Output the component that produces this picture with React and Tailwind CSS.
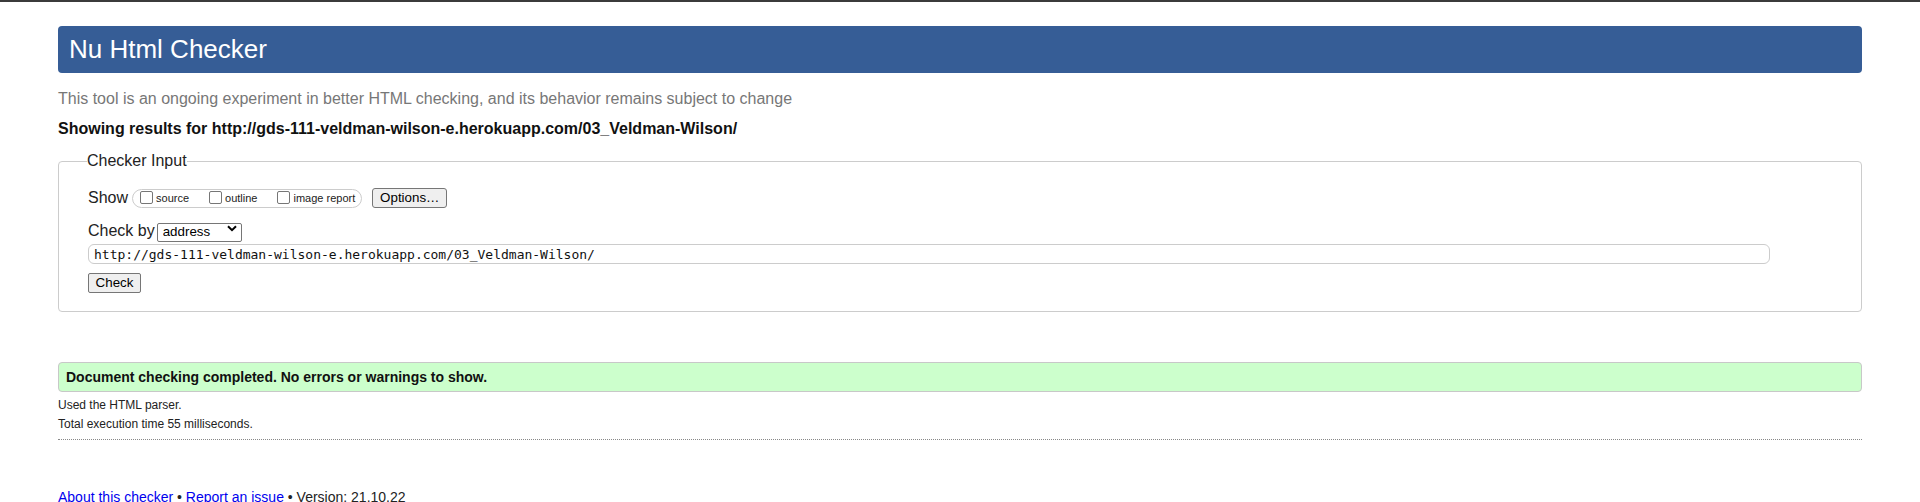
import React from 'react'

const url = 'http://gds-111-veldman-wilson-e.herokuapp.com/03_Veldman-Wilson/'

function ShowOption({ label, last }) {
  return (
    <label className={`flex items-center ${last ? '' : 'mr-[20px]'}`}>
      <input
        type="checkbox"
        className="appearance-none w-[13px] h-[13px] mb-[2px] border border-[#767676] rounded-[2px] bg-white"
      />
      <span className="ml-[3px] text-[11px] leading-[13px] text-[#222]">{label}</span>
    </label>
  )
}

function CheckerInput() {
  return (
    <fieldset className="mt-[12px] border border-[#cccccc] rounded-[4px] px-[29px] pb-[18px]">
      <legend className="-ml-[1px] text-[16px] leading-[20px] text-[#222]">Checker Input</legend>

      <div className="mt-[17px] flex items-center h-[20px]">
        <span className="text-[16px] leading-[20px] text-[#222]">Show</span>
        <div className="ml-[4px] flex items-center h-[19px] pl-[7px] pr-[6px] border border-[#cccccc] rounded-full">
          <ShowOption label="source" />
          <ShowOption label="outline" />
          <ShowOption label="image report" last />
        </div>
        <button className="ml-[10px] w-[75px] h-[20px] bg-[#efefef] border border-[#767676] rounded-[3px] text-[13.33px] leading-[16px] text-black">
          Options…
        </button>
      </div>

      <div className="mt-[13px] flex items-center h-[20px]">
        <span className="text-[16px] leading-[20px] text-[#222]">Check by</span>
        <div className="relative ml-[2px]">
          <select className="appearance-none w-[85px] h-[19px] pl-[5px] bg-white border border-[#767676] rounded-[2px] text-[13.33px] leading-[16px] text-black">
            <option>address</option>
          </select>
          <svg className="absolute right-[5px] top-[6px] pointer-events-none" width="10" height="7" viewBox="0 0 10 7">
            <path d="M1 1.2l4 4 4-4" fill="none" stroke="#000" strokeWidth="2" />
          </svg>
        </div>
      </div>

      <input
        readOnly
        value={url}
        className="mt-[3px] block w-[1682px] h-[20px] px-[5px] border border-[#cccccc] rounded-[6px] text-[13px] leading-[18px] text-[#111] font-['DejaVu_Sans_Mono',monospace]"
      />

      <button className="mt-[9px] block w-[53px] h-[20px] bg-[#efefef] border border-[#767676] rounded-[2px] text-[13.33px] leading-[16px] text-black">
        Check
      </button>
    </fieldset>
  )
}

export default function App() {
  return (
    <div className="min-h-[502px] bg-white font-['Liberation_Sans',Arial,sans-serif] overflow-hidden">
      <div className="h-[2px] bg-[#3b3b3b]" />
      <div className="mx-[58px]">
        <h1 className="mt-[24px] flex items-center h-[47px] pl-[11px] pb-[1px] rounded-[4px] bg-[#365d96] text-white text-[26px] font-normal">
          Nu Html Checker
        </h1>
        <p className="mt-[16px] text-[16px] leading-[20px] text-[#777]">
          This tool is an ongoing experiment in better HTML checking, and its behavior remains subject to change
        </p>
        <p className="mt-[10px] text-[16px] leading-[20px] font-bold text-[#111]">
          Showing results for {url}
        </p>

        <CheckerInput />

        <div className="mt-[50px] flex items-center h-[30px] pl-[7px] bg-[#ccffcc] border border-[#c8c8c8] rounded-[4px]">
          <span className="text-[14px] font-bold text-[#111]">
            Document checking completed. No errors or warnings to show.
          </span>
        </div>

        <div className="mt-[4px] text-[12px] leading-[19px] text-[#222]">
          <p>Used the HTML parser.</p>
          <p>Total execution time 55 milliseconds.</p>
        </div>

        <div className="mt-[5px] border-t border-dotted border-[#888]" />

        <p className="mt-[49px] text-[14px] leading-[16px] text-[#222]">
          <a href="#" className="text-[#0000ee]">About this checker</a>
          {' • '}
          <a href="#" className="text-[#0000ee]">Report an issue</a>
          {' • Version: 21.10.22'}
        </p>
      </div>
    </div>
  )
}
